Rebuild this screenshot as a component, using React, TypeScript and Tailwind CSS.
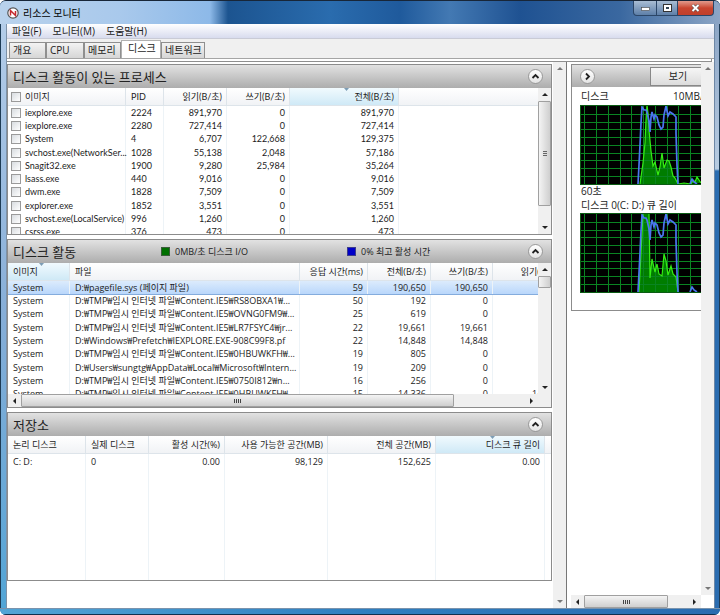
import { useId, useState } from "react";
import type { ReactNode } from "react";

type Dir = "up" | "down" | "left" | "right";

const ARROWS: Record<Dir, string> = {
  up: "M0 4 L3 1 L6 4 Z",
  down: "M0 1 L3 4 L6 1 Z",
  left: "M4 0 L1 3 L4 6 Z",
  right: "M1 0 L4 3 L1 6 Z",
};

function Arrow({ dir, dim }: { dir: Dir; dim?: boolean }) {
  const flat = dir === "up" || dir === "down";
  return (
    <svg width={flat ? 6 : 5} height={flat ? 5 : 6} aria-hidden="true">
      <path d={ARROWS[dir]} fill={dim ? "#777" : "#222"} />
    </svg>
  );
}

function ScrollButton({ dir, dim }: { dir: Dir; dim?: boolean }) {
  return (
    <button
      type="button"
      aria-label={dir}
      className="flex h-[13px] w-[13px] shrink-0 items-center justify-center"
    >
      <Arrow dir={dir} dim={dim} />
    </button>
  );
}

function VScroll({ thumb, dim }: { thumb?: string; dim?: boolean }) {
  return (
    <div className="flex w-[13px] shrink-0 flex-col items-center bg-[#f0f0f0]">
      <ScrollButton dir="up" dim={dim} />
      <div className="w-full flex-1">
        {thumb && (
          <div
            className={`flex w-full items-center justify-center rounded-[1px] border border-[#a0a0a0] bg-gradient-to-r from-[#f4f4f4] to-[#cfcfcf] ${thumb}`}
          >
            {thumb !== "h-3" && (
              <div className="flex flex-col gap-px">
                <div className="h-px w-1 bg-[#666]" />
                <div className="h-px w-1 bg-[#666]" />
                <div className="h-px w-1 bg-[#666]" />
              </div>
            )}
          </div>
        )}
      </div>
      <ScrollButton dir="down" dim={dim} />
    </div>
  );
}

function HScroll({ thumb }: { thumb: string }) {
  return (
    <div className="flex h-[13px] min-w-0 flex-1 items-center bg-[#f0f0f0]">
      <ScrollButton dir="left" />
      <div className="h-full min-w-0 flex-1">
        <div
          className={`flex h-full items-center justify-center gap-px rounded-[1px] border border-[#a0a0a0] bg-gradient-to-b from-[#f4f4f4] to-[#cfcfcf] ${thumb}`}
        >
          <div className="h-1 w-px bg-[#444]" />
          <div className="h-1 w-px bg-[#444]" />
          <div className="h-1 w-px bg-[#444]" />
          <div className="h-1 w-px bg-[#444]" />
        </div>
      </div>
      <ScrollButton dir="right" />
    </div>
  );
}

function RoundButton({ label, d }: { label: string; d: string }) {
  return (
    <button
      type="button"
      aria-label={label}
      className="flex size-[15px] shrink-0 items-center justify-center rounded-full border border-[#999] bg-gradient-to-b from-white to-[#e4e4e4]"
    >
      <svg width="9" height="9" viewBox="0 0 9 9" aria-hidden="true">
        <path d={d} fill="none" stroke="#222" strokeWidth="1.8" />
      </svg>
    </button>
  );
}

interface PanelProps {
  title: string;
  legend?: ReactNode;
  className?: string;
  children: ReactNode;
}

function Panel({ title, legend, className = "", children }: PanelProps) {
  return (
    <section className={`flex flex-col border border-[#8c8c8c] bg-white ${className}`}>
      <header className="flex h-[23px] shrink-0 items-center bg-gradient-to-b from-[#e2e2e2] to-[#adadad] pr-2 pl-[5px]">
        <h2 className="w-[148px] text-[13px] leading-5 whitespace-nowrap text-[#222]">{title}</h2>
        <div className="flex flex-1 items-center">{legend}</div>
        <RoundButton label="접기" d="M1.5 6 L4.5 3 L7.5 6" />
      </header>
      {children}
    </section>
  );
}

function SortMark() {
  return (
    <svg className="absolute top-0 left-1/2" width="5" height="3" aria-hidden="true">
      <path d="M0 0 H5 L2.5 3 Z" fill="#7d9db5" />
    </svg>
  );
}

interface Column {
  label: string;
  width: string;
  align: "left" | "right";
  sorted?: boolean;
  check?: boolean;
}

interface GridProps {
  name: string;
  columns: Column[];
  rows: string[][];
  head: string;
  row?: string;
  className?: string;
  selected?: number;
  filler?: boolean;
}

function Check({ label }: { label: string }) {
  const id = useId();
  return (
    <>
      <input
        id={id}
        type="checkbox"
        className="size-[10px] shrink-0 appearance-none border border-[#9a9a9a] bg-gradient-to-br from-[#d8dce0] to-white"
      />
      <label htmlFor={id}>{label}</label>
    </>
  );
}

function Grid({ name, columns, rows, head, row = "", className = "", selected, filler }: GridProps) {
  const cell = (c: Column) =>
    c.align === "right" ? "pr-1 text-right" : "pl-[5px] text-left";
  return (
    <table
      aria-label={name}
      className={`w-full table-fixed border-separate border-spacing-0 text-[9px] leading-3 whitespace-nowrap ${className}`}
    >
      <colgroup>
        {columns.map((c) => (
          <col key={c.label} className={c.width} />
        ))}
        <col />
      </colgroup>
      <thead>
        <tr className={`bg-gradient-to-b from-white to-[#f0f2f5] ${head}`}>
          {columns.map((c) => (
            <th
              key={c.label}
              scope="col"
              className={`relative border-r border-b border-[#dde4ea] p-0 font-normal ${head} ${cell(c)} ${
                c.sorted ? "bg-gradient-to-b from-[#f1fafe] to-[#cfe9f6]" : ""
              }`}
            >
              {c.sorted && <SortMark />}
              {c.check ? (
                <div className="-ml-0.5 flex items-center gap-1">
                  <Check label={c.label} />
                </div>
              ) : (
                c.label
              )}
            </th>
          ))}
          <td className="border-b border-[#dde4ea] p-0" />
        </tr>
      </thead>
      <tbody>
        {rows.map((r, i) => (
          <tr
            key={i}
            className={
              i === selected
                ? "bg-gradient-to-b from-[#dcebfc] to-[#b9d7fb] outline outline-[#84acdd]"
                : row
            }
          >
            {columns.map((c, j) => (
              <td
                key={c.label}
                className={`border-r border-[#edf3f7] p-0 ${cell(c)}`}
              >
                {c.check ? (
                  <div className="-ml-0.5 flex items-center gap-1">
                    <Check label={r[j]} />
                  </div>
                ) : (
                  r[j]
                )}
              </td>
            ))}
            <td className="p-0" />
          </tr>
        ))}
        {filler && (
          <tr className="h-full" aria-hidden="true">
            {columns.map((c) => (
              <td key={c.label} className="border-r border-[#edf3f7] p-0" />
            ))}
            <td className="p-0" />
          </tr>
        )}
      </tbody>
    </table>
  );
}

const PROCESS_COLUMNS: Column[] = [
  { label: "이미지", width: "w-[118px]", align: "left", check: true },
  { label: "PID", width: "w-[38px]", align: "left" },
  { label: "읽기(B/초)", width: "w-[63px]", align: "right" },
  { label: "쓰기(B/초)", width: "w-[63px]", align: "right" },
  { label: "전체(B/초)", width: "w-[109px]", align: "right", sorted: true },
];

const PROCESSES = [
  ["iexplore.exe", "2224", "891,970", "0", "891,970"],
  ["iexplore.exe", "2280", "727,414", "0", "727,414"],
  ["System", "4", "6,707", "122,668", "129,375"],
  ["svchost.exe(NetworkSer...", "1028", "55,138", "2,048", "57,186"],
  ["Snagit32.exe", "1900", "9,280", "25,984", "35,264"],
  ["lsass.exe", "440", "9,016", "0", "9,016"],
  ["dwm.exe", "1828", "7,509", "0", "7,509"],
  ["explorer.exe", "1852", "3,551", "0", "3,551"],
  ["svchost.exe(LocalService)", "996", "1,260", "0", "1,260"],
  ["csrss.exe", "376", "473", "0", "473"],
];

const ACTIVITY_COLUMNS: Column[] = [
  { label: "이미지", width: "w-[62px]", align: "left", sorted: true },
  { label: "파일", width: "w-[230px]", align: "left" },
  { label: "응답 시간(ms)", width: "w-[68px]", align: "right" },
  { label: "전체(B/초)", width: "w-[63px]", align: "right" },
  { label: "쓰기(B/초)", width: "w-[62px]", align: "right" },
  { label: "읽기(B/초)", width: "w-[72px]", align: "right" },
];

const ACTIVITY = [
  ["System", "D:₩pagefile.sys (페이지 파일)", "59", "190,650", "190,650", ""],
  ["System", "D:₩TMP₩임시 인터넷 파일₩Content.IE5₩RS8OBXA1₩...", "50", "192", "0", ""],
  ["System", "D:₩TMP₩임시 인터넷 파일₩Content.IE5₩OVNG0FM9₩...", "25", "619", "0", ""],
  ["System", "D:₩TMP₩임시 인터넷 파일₩Content.IE5₩LR7FSYC4₩jr...", "22", "19,661", "19,661", ""],
  ["System", "D:₩Windows₩Prefetch₩IEXPLORE.EXE-908C99F8.pf", "22", "14,848", "14,848", ""],
  ["System", "D:₩TMP₩임시 인터넷 파일₩Content.IE5₩0HBUWKFH₩...", "19", "805", "0", ""],
  ["System", "D:₩Users₩sungtg₩AppData₩Local₩Microsoft₩Intern...", "19", "209", "0", ""],
  ["System", "D:₩TMP₩임시 인터넷 파일₩Content.IE5₩0750I812₩n...", "16", "256", "0", ""],
  ["System", "D:₩TMP₩임시 인터넷 파일₩Content.IE5₩0HBUWKFH₩...", "15", "14,336", "0", "14,336"],
];

const STORAGE_COLUMNS: Column[] = [
  { label: "논리 디스크", width: "w-[78px]", align: "left" },
  { label: "실제 디스크", width: "w-[63px]", align: "left" },
  { label: "활성 시간(%)", width: "w-[76px]", align: "right" },
  { label: "사용 가능한 공간(MB)", width: "w-[103px]", align: "right" },
  { label: "전체 공간(MB)", width: "w-[108px]", align: "right" },
  { label: "디스크 큐 길이", width: "w-[109px]", align: "right", sorted: true },
];

const STORAGE = [["C: D:", "0", "0.00", "98,129", "152,625", "0.00"]];

const ACTIVE_LINE =
  "58,79 59,60 60,40 61,18 62,2 64,5 66,5 67,7 69,16 70,27 71,12 72,7 74,14 75,10 77,12 79,20 81,24 83,22 84,10 86,1 88,11 90,7 93,9 96,12 96,28 97,60 98,79";

function Graph({ label, fill, tail }: { label: string; fill: string; tail?: string }) {
  const vertical = [4, 16, 28, 40, 51, 63, 75, 87, 98, 110];
  const horizontal = [9, 17, 24, 32, 40, 48, 55, 63, 71];
  return (
    <svg className="block w-[121px] shrink-0" height="80" role="img" aria-label={label}>
      <rect width="121" height="80" fill="#000" />
      <polygon points={fill} fill="#007d00" />
      {vertical.map((x) => (
        <path key={x} d={`M${x}.5 0V80`} stroke="#0a8422" strokeWidth="1" />
      ))}
      {horizontal.map((y) => (
        <path key={y} d={`M0 ${y}.5H121`} stroke="#0a8422" strokeWidth="1" />
      ))}
      <polyline points={fill} fill="none" stroke="#35ee14" strokeWidth="1.2" />
      {tail && <polyline points={tail} fill="#007d00" stroke="#35ee14" strokeWidth="1.2" />}
      <polyline points={ACTIVE_LINE} fill="none" stroke="#4a76f0" strokeWidth="1.7" />
      <polyline points="110,79 112,74 114,77 117,79" fill="none" stroke="#4a76f0" strokeWidth="1.7" />
      <rect x="0.5" y="0.5" width="130" height="79" fill="none" stroke="#0b5c14" />
    </svg>
  );
}

const TABS = [
  { name: "개요", width: "w-[37px]" },
  { name: "CPU", width: "w-[38px]" },
  { name: "메모리", width: "w-[37px]" },
  { name: "디스크", width: "w-[40px]" },
  { name: "네트워크", width: "w-[44px]" },
];

function TitleBar() {
  const control =
    "flex h-[15px] items-center justify-center border border-t-0 border-[#2b4668]";
  return (
    <header className="flex h-[23px] shrink-0 items-start bg-[linear-gradient(90deg,#b9d2ec_0px,#a9c9ec_120px,#8db9e8_210px,#1c5490_228px,#2a6cae_330px,#1f5a9c_400px,#4379b3_450px,#1f5292_520px,#3a68a0_620px,#8da6c6_720px)] pr-1.5 pl-[7px]">
      <div className="flex h-[23px] flex-1 items-center gap-1">
        <svg width="12" height="12" viewBox="0 0 12 12" aria-hidden="true">
          <circle cx="6" cy="6" r="5.2" fill="#fff" stroke="#555" strokeWidth="1.2" />
          <path d="M3.5 8.5V3.5L8.5 8.5V4" fill="none" stroke="#c4282d" strokeWidth="1.5" />
        </svg>
        <h1 className="text-[10px] leading-3 text-black">리소스 모니터</h1>
      </div>
      <button
        type="button"
        aria-label="최소화"
        className={`w-6 rounded-bl bg-gradient-to-b from-[#a9bdd4] to-[#5d7fa8] ${control}`}
      >
        <svg width="9" height="5" aria-hidden="true">
          <rect x="0.5" y="1.5" width="8" height="3" fill="#fff" stroke="#444" strokeWidth="0.6" />
        </svg>
      </button>
      <button
        type="button"
        aria-label="최대화"
        className={`w-[21px] border-l-0 bg-gradient-to-b from-[#a9bdd4] to-[#5d7fa8] ${control}`}
      >
        <svg width="9" height="8" aria-hidden="true">
          <rect x="0.5" y="0.5" width="8" height="7" fill="#fff" stroke="#333" />
          <rect x="3" y="3" width="3" height="2" fill="#345" />
        </svg>
      </button>
      <button
        type="button"
        aria-label="닫기"
        className={`w-9 rounded-br border-l-0 bg-gradient-to-b from-[#e09a8c] via-[#c8452f] to-[#c0402c] ${control}`}
      >
        <svg width="9" height="8" viewBox="0 0 9 8" aria-hidden="true">
          <path d="M1.5 1L7.5 7M7.5 1L1.5 7" stroke="#444" strokeWidth="3" />
          <path d="M1.5 1L7.5 7M7.5 1L1.5 7" stroke="#fff" strokeWidth="2" />
        </svg>
      </button>
    </header>
  );
}

function Legend() {
  return (
    <div className="flex text-[9px] leading-3 whitespace-nowrap">
      <div className="flex w-[186px] items-center gap-[5px]">
        <span className="size-[9px] border border-[#3c5c3c] bg-[#007000]" />
        0MB/초 디스크 I/O
      </div>
      <div className="flex items-center gap-[5px]">
        <span className="size-[9px] border border-[#3c3c8c] bg-[#0000c8]" />
        0% 최고 활성 시간
      </div>
    </div>
  );
}

export default function App() {
  const [active, setActive] = useState("디스크");
  return (
    <div className="flex min-h-screen flex-col overflow-hidden rounded-md border-t border-[#182638] bg-[#2a6cb0] font-['Open_Sans','Noto_Sans_CJK_KR',sans-serif] text-[#1c1c1c]">
      <TitleBar />
      <div className="flex flex-1">
        <div className="w-[7px] shrink-0 border-r border-l border-r-[#7d92a8] border-l-[#1d3b55] bg-gradient-to-b from-[#b4cde9] via-[#86aed8] to-[#52a5d6]" />
        <div className="flex min-w-0 flex-1 flex-col bg-white">
          <nav className="flex h-[15px] items-center gap-[11px] border-b border-[#c9cbd6] bg-gradient-to-b from-white to-[#d8dcee] pl-[5px] text-[10px] leading-3">
            <button type="button">파일(F)</button>
            <button type="button">모니터(M)</button>
            <button type="button">도움말(H)</button>
          </nav>
          <div
            role="tablist"
            className="flex h-5 items-end border-b border-[#a5a5a5] bg-[#f0f0f0] pl-0.5 text-[10px] leading-3"
          >
            {TABS.map((t) => (
              <button
                key={t.name}
                type="button"
                role="tab"
                aria-selected={t.name === active}
                onClick={() => setActive(t.name)}
                className={`border border-b-0 text-left whitespace-nowrap ${t.width} ${
                  t.name === active
                    ? "h-[18px] border-[#b0b0b0] bg-white pb-1 pl-1.5"
                    : "h-4 border-[#8f8f8f] bg-gradient-to-b from-[#f3f3f3] to-[#d6d6d6] pb-px pl-[3px]"
                }`}
              >
                {t.name}
              </button>
            ))}
          </div>
          <div className="mr-0.5 h-[3px] shrink-0 border-r border-b border-[#8f8f8f]" />

          <div className="flex min-h-0 flex-1">
            <main className="flex min-w-0 flex-1 flex-col gap-1 pt-0.5 pb-[27px]">
              <Panel title="디스크 활동이 있는 프로세스">
                <div className="flex h-[146px]">
                  <div className="min-w-0 flex-1 overflow-hidden">
                    <Grid
                      name="디스크 활동이 있는 프로세스"
                      columns={PROCESS_COLUMNS}
                      rows={PROCESSES}
                      head="h-[18px]"
                      className="h-[151px] font-[Lato,'Noto_Sans_CJK_KR',sans-serif]"
                    />
                  </div>
                  <VScroll thumb="h-[105px]" />
                </div>
              </Panel>

              <Panel title="디스크 활동" legend={<Legend />}>
                <div className="flex h-[131px]">
                  <div className="min-w-0 flex-1 overflow-hidden">
                    <Grid
                      name="디스크 활동"
                      columns={ACTIVITY_COLUMNS}
                      rows={ACTIVITY}
                      head="h-[18px]"
                      className="h-[138px]"
                      selected={0}
                    />
                  </div>
                  <VScroll thumb="h-3" />
                </div>
                <div className="flex bg-[#f0f0f0] pr-[13px]">
                  <HScroll thumb="w-[86%]" />
                </div>
              </Panel>

              <Panel title="저장소" className="flex-1">
                <div className="flex flex-1">
                  <Grid
                    name="저장소"
                    columns={STORAGE_COLUMNS}
                    rows={STORAGE}
                    head="h-[18px]"
                    row="h-[15px]"
                    className="h-auto"
                    filler
                  />
                </div>
              </Panel>
            </main>
            <div className="ml-px flex border-r border-[#777]">
              <VScroll dim />
            </div>

            <aside className="ml-1 flex w-[143px] shrink-0 flex-col">
              <div className="flex flex-1">
                <div className="min-w-0 flex-1 pt-0.5">
                  <div className="h-[247px] overflow-hidden border border-r-0 border-[#8c8c8c]">
                    <div className="flex h-[22px] items-center justify-between bg-gradient-to-b from-[#e2e2e2] to-[#adadad] pl-2">
                      <RoundButton label="확장" d="M3 1.5 L6 4.5 L3 7.5" />
                      <button
                        type="button"
                        className="h-[19px] w-[51px] border border-r-0 border-[#888] bg-gradient-to-b from-[#f6f6f6] to-[#dcdcdc] pl-1 text-[10px] leading-3"
                      >
                        보기
                      </button>
                    </div>
                    <div className="flex flex-col pl-2 text-[10px] leading-3 whitespace-nowrap">
                      <div className="flex h-[18px] items-center justify-between overflow-hidden pl-px">
                        <span>디스크</span>
                        <span className="w-7">10MB/초</span>
                      </div>
                      <Graph
                        label="디스크"
                        fill="60,79 63,58 65,38 66,15 67,0 68,8 69,25 71,46 73,61 75,57 78,70 80,62 82,48 84,63 87,55 89,56 91,62 93,71 95,73 98,79"
                        tail="98,79 104,78 111,79 113,75 115,77 117,72 121,78"
                      />
                      <div className="h-3.5 pl-px">60초</div>
                      <div className="h-3.5 pl-px">디스크 0(C: D:) 큐 길이</div>
                      <Graph
                        label="디스크 0(C: D:) 큐 길이"
                        fill="59,79 61,40 63,0 69,0 70,65 72,46 74,55 75,59 77,51 79,61 82,63 84,41 86,48 88,62 91,53 93,61 96,64 98,79"
                      />
                    </div>
                  </div>
                </div>
                <VScroll dim />
              </div>
              <div className="flex pr-[13px]">
                <HScroll thumb="w-[81%]" />
              </div>
            </aside>
          </div>
        </div>
        <div className="w-1.5 shrink-0 border-r border-l border-r-[#1d3b55] border-l-[#6d87a5] bg-[linear-gradient(180deg,#8da6c6_0px,#b9cde2_145px,#2a6cb0_147px)]" />
      </div>
      <div className="h-[7px] shrink-0 border-t border-b border-t-[#7a93ad] border-b-[#10304f] bg-gradient-to-r from-[#52a5d6] via-[#2f7fc0] to-[#2a6cb0]" />
    </div>
  );
}
